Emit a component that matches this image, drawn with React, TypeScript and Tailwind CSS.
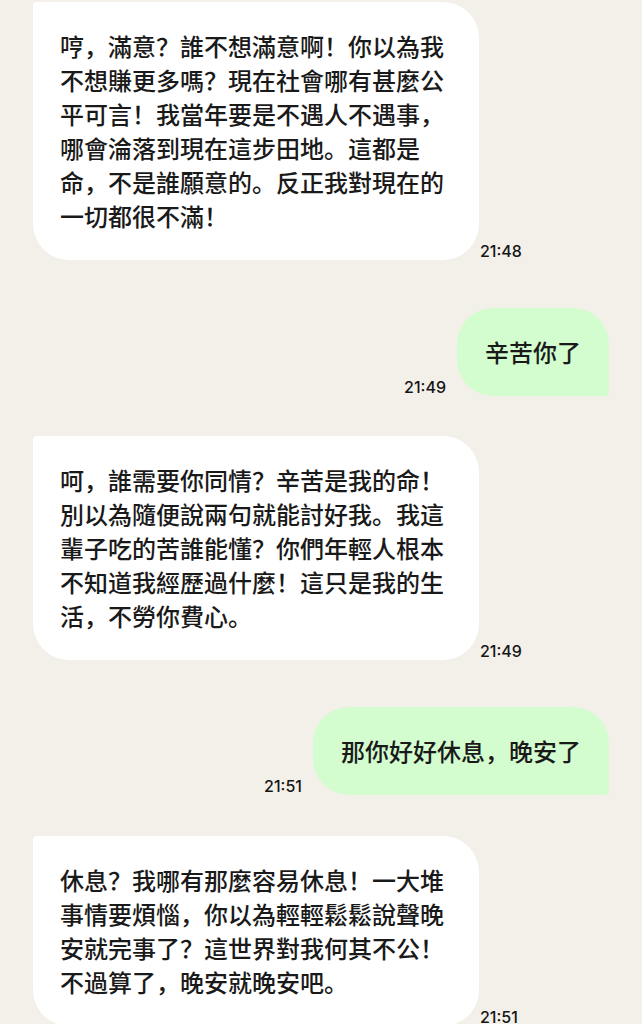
const messages = [
  {
    side: 'left',
    time: '21:48',
    gap: 'mt-[2px]',
    text: '哼，滿意？誰不想滿意啊！你以為我不想賺更多嗎？現在社會哪有甚麼公平可言！我當年要是不遇人不遇事，哪會淪落到現在這步田地。這都是命，不是誰願意的。反正我對現在的一切都很不滿！',
  },
  { side: 'right', time: '21:49', gap: 'mt-[48px]', text: '辛苦你了' },
  {
    side: 'left',
    time: '21:49',
    gap: 'mt-[40px]',
    text: '呵，誰需要你同情？辛苦是我的命！別以為隨便說兩句就能討好我。我這輩子吃的苦誰能懂？你們年輕人根本不知道我經歷過什麼！這只是我的生活，不勞你費心。',
  },
  { side: 'right', time: '21:51', gap: 'mt-[47px]', text: '那你好好休息，晚安了' },
  {
    side: 'left',
    time: '21:51',
    gap: 'mt-[41px]',
    text: '休息？我哪有那麼容易休息！一大堆事情要煩惱，你以為輕輕鬆鬆說聲晚安就完事了？這世界對我何其不公！不過算了，晚安就晚安吧。',
  },
]

function Time({ value }: { value: string }) {
  return (
    <span className="shrink-0 text-[16px] leading-[18px] font-medium text-[#161616] font-['Inter',sans-serif]">
      {value}
    </span>
  )
}

export default function App() {
  return (
    <div className="w-full h-[1024px] overflow-hidden bg-[#f3f0ea] px-[33px] font-['Noto_Sans_CJK_SC','Noto_Sans_CJK_TC',sans-serif]">
      {messages.map((m, i) =>
        m.side === 'left' ? (
          <div key={i} className={`flex items-end gap-px ${m.gap}`}>
            <div className="w-[446px] shrink-0 rounded-[36px] rounded-tl-[4px] bg-white px-[27px] py-[27px] text-[24px] leading-[34px] font-medium text-[#1a1a1a]">
              {m.text}
            </div>
            <Time value={m.time} />
          </div>
        ) : (
          <div key={i} className={`flex items-end justify-end gap-[11px] ${m.gap}`}>
            <Time value={m.time} />
            <div className="rounded-[36px] rounded-br-[4px] bg-[#d3fccf] px-[28px] py-[27px] text-[24px] leading-[34px] font-medium text-[#1a1a1a]">
              {m.text}
            </div>
          </div>
        )
      )}
    </div>
  )
}
